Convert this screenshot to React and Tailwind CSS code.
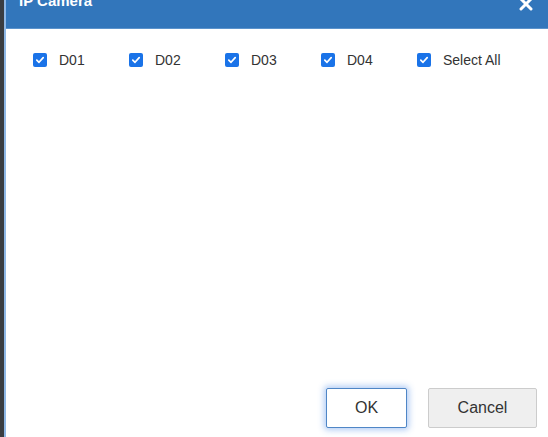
import React, { useState } from "react";

const items = ["D01", "D02", "D03", "D04", "Select All"];

function Check({ checked }) {
  return (
    <span className="w-[14px] h-[14px] rounded-[2px] bg-[#1a73e8] flex items-center justify-center">
      {checked && (
        <svg width="10" height="10" viewBox="0 0 10 10">
          <path d="M1.8 5.2 L4 7.3 L8.2 2.6" fill="none" stroke="white" strokeWidth="1.7" strokeLinecap="round" strokeLinejoin="round" />
        </svg>
      )}
    </span>
  );
}

export default function App() {
  const [checked] = useState([true, true, true, true, true]);
  return (
    <div className="w-[548px] h-[437px] overflow-hidden flex bg-[#3a3d41] font-['Liberation_Sans',Arial,sans-serif]">
      <div className="w-[4px] shrink-0 bg-[#3a3d41]" />
      <div className="w-[2px] shrink-0 bg-[#8fb8e6]" />
      <div className="flex-1 flex flex-col bg-white">
        <div className="h-[29px] shrink-0 bg-[#3276bb] border-b border-[#5b93cc] flex justify-between items-start overflow-hidden px-[13px]">
          <span className="text-white text-[15px] font-bold -mt-[9px] leading-[20px]">IP Camera</span>
          <svg width="16" height="16" viewBox="0 0 16 16" className="-mt-[4px] mr-[1px]">
            <path d="M3 3 L13 13 M13 3 L3 13" stroke="white" strokeWidth="3" strokeLinecap="round" />
          </svg>
        </div>
        <div className="flex pl-[27px] pt-[24px]">
          {items.map((t, i) => (
            <label key={t} className="w-[96px] flex items-center gap-[12px] text-[14px] text-[#333]">
              <Check checked={checked[i]} />
              <span className="leading-[14px]">{t}</span>
            </label>
          ))}
        </div>
        <div className="flex-1" />
        <div className="flex justify-end gap-[21px] pr-[11px] pb-[9px]">
          <button className="w-[81px] h-[40px] bg-white border border-[#4f86c6] rounded-[2px] shadow-[0_0_6px_2px_rgba(80,140,230,0.45)] text-[16px] text-[#333]">OK</button>
          <button className="w-[109px] h-[40px] bg-[#efefef] border border-[#cccccc] rounded-[2px] text-[16px] text-[#333]">Cancel</button>
        </div>
      </div>
    </div>
  );
}
